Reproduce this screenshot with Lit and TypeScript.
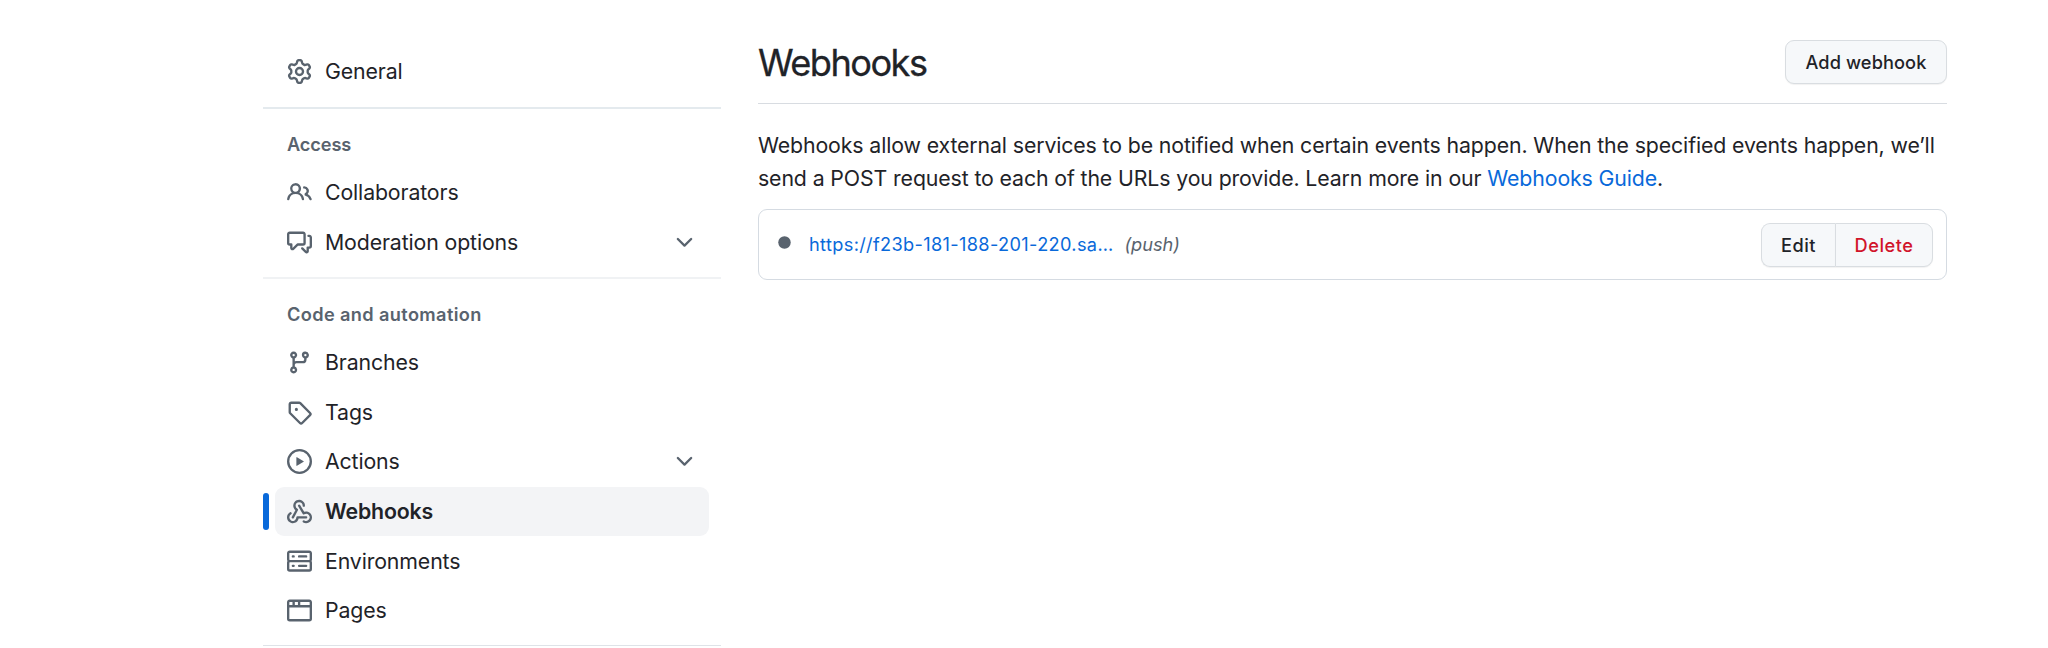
import { LitElement, html, css, svg } from "lit";
import { customElement } from "lit/decorators.js";

const icons: Record<string, string> = {
  gear: "M8 0a8.2 8.2 0 0 1 .701.031C9.444.095 9.99.645 10.16 1.29l.288 1.107c.018.066.079.158.212.224.231.114.454.243.668.386.123.082.233.09.299.071l1.103-.303c.644-.176 1.392.021 1.82.63.27.385.506.792.704 1.218.315.675.111 1.422-.364 1.891l-.814.806c-.049.048-.098.147-.088.294.016.257.016.515 0 .772-.01.147.038.246.088.294l.814.806c.475.469.679 1.216.364 1.891a7.977 7.977 0 0 1-.704 1.217c-.428.61-1.176.807-1.82.63l-1.102-.302c-.067-.019-.177-.011-.3.071a5.909 5.909 0 0 1-.668.386c-.133.066-.194.158-.211.224l-.29 1.106c-.168.646-.715 1.196-1.458 1.26a8.006 8.006 0 0 1-1.402 0c-.743-.064-1.289-.614-1.458-1.26l-.289-1.106c-.018-.066-.079-.158-.212-.224a5.738 5.738 0 0 1-.668-.386c-.123-.082-.233-.09-.299-.071l-1.103.303c-.644.176-1.392-.021-1.82-.63a8.12 8.12 0 0 1-.704-1.218c-.315-.675-.111-1.422.363-1.891l.815-.806c.05-.048.098-.147.088-.294a6.214 6.214 0 0 1 0-.772c.01-.147-.038-.246-.088-.294l-.815-.806C.635 6.045.431 5.298.746 4.623a7.92 7.92 0 0 1 .704-1.217c.428-.61 1.176-.807 1.82-.63l1.102.302c.067.019.177.011.3-.071.214-.143.437-.272.668-.386.133-.066.194-.158.211-.224l.29-1.106C6.009.645 6.556.095 7.299.03 7.53.01 7.764 0 8 0Zm-.571 1.525c-.036.003-.108.036-.137.146l-.289 1.105c-.147.561-.549.967-.998 1.189-.173.086-.34.183-.5.29-.417.278-.97.423-1.529.27l-1.103-.303c-.109-.03-.175.016-.195.045-.22.312-.412.644-.573.99-.014.031-.021.11.059.19l.815.806c.411.406.562.957.53 1.456a4.709 4.709 0 0 0 0 .582c.032.499-.119 1.05-.53 1.456l-.815.806c-.081.08-.073.159-.059.19.162.346.353.677.573.989.02.03.085.076.195.046l1.102-.303c.56-.153 1.113-.008 1.53.27.161.107.328.204.501.29.447.222.85.629.997 1.189l.289 1.105c.029.109.101.143.137.146a6.6 6.6 0 0 0 1.142 0c.036-.003.108-.036.137-.146l.289-1.105c.147-.561.549-.967.998-1.189.173-.086.34-.183.5-.29.417-.278.97-.423 1.529-.27l1.103.303c.109.029.175-.016.195-.045.22-.313.411-.644.573-.99.014-.031.021-.11-.059-.19l-.815-.806c-.411-.406-.562-.957-.53-1.456a4.709 4.709 0 0 0 0-.582c-.032-.499.119-1.05.53-1.456l.815-.806c.081-.08.073-.159.059-.19a6.464 6.464 0 0 0-.573-.989c-.02-.03-.085-.076-.195-.046l-1.102.303c-.56.153-1.113.008-1.53-.27a4.44 4.44 0 0 0-.501-.29c-.447-.222-.85-.629-.997-1.189l-.289-1.105c-.029-.11-.101-.143-.137-.146a6.6 6.6 0 0 0-1.142 0ZM11 8a3 3 0 1 1-6 0 3 3 0 0 1 6 0ZM9.5 8a1.5 1.5 0 1 0-3.001.001A1.5 1.5 0 0 0 9.5 8Z",
  people: "M2 5.5a3.5 3.5 0 1 1 5.898 2.549 5.508 5.508 0 0 1 3.034 4.084.75.75 0 1 1-1.482.235 4 4 0 0 0-7.9 0 .75.75 0 0 1-1.482-.236A5.507 5.507 0 0 1 3.102 8.05 3.493 3.493 0 0 1 2 5.5ZM11 4a3.001 3.001 0 0 1 2.22 5.018 5.01 5.01 0 0 1 2.56 3.012.749.749 0 0 1-.885.954.752.752 0 0 1-.549-.514 3.507 3.507 0 0 0-2.522-2.372.75.75 0 0 1-.574-.73v-.352a.75.75 0 0 1 .416-.672A1.5 1.5 0 0 0 11 5.5.75.75 0 0 1 11 4Zm-5.5-.5a2 2 0 1 0-.001 3.999A2 2 0 0 0 5.5 3.5Z",
  comments: "M1.75 1h8.5c.966 0 1.75.784 1.75 1.75v5.5A1.75 1.75 0 0 1 10.25 10H7.061l-2.574 2.573A1.458 1.458 0 0 1 2 11.543V10h-.25A1.75 1.75 0 0 1 0 8.25v-5.5C0 1.784.784 1 1.75 1ZM1.5 2.75v5.5c0 .138.112.25.25.25h1a.75.75 0 0 1 .75.75v2.19l2.72-2.72a.749.749 0 0 1 .53-.22h3.5a.25.25 0 0 0 .25-.25v-5.5a.25.25 0 0 0-.25-.25h-8.5a.25.25 0 0 0-.25.25Zm13 2a.25.25 0 0 0-.25-.25h-.5a.75.75 0 0 1 0-1.5h.5c.966 0 1.75.784 1.75 1.75v5.5A1.75 1.75 0 0 1 14.25 12H14v1.543a1.458 1.458 0 0 1-2.487 1.03L9.22 12.28a.749.749 0 0 1 .326-1.275.749.749 0 0 1 .734.215l2.22 2.22v-2.19a.75.75 0 0 1 .75-.75h1a.25.25 0 0 0 .25-.25Z",
  branch: "M9.5 3.25a2.25 2.25 0 1 1 3 2.122V6A2.5 2.5 0 0 1 10 8.5H6a1 1 0 0 0-1 1v1.128a2.251 2.251 0 1 1-1.5 0V5.372a2.25 2.25 0 1 1 1.5 0v1.836A2.493 2.493 0 0 1 6 7h4a1 1 0 0 0 1-1v-.628A2.25 2.25 0 0 1 9.5 3.25Zm-6 0a.75.75 0 1 0 1.5 0 .75.75 0 0 0-1.5 0Zm8.25-.75a.75.75 0 1 0 0 1.5.75.75 0 0 0 0-1.5ZM4.25 12a.75.75 0 1 0 0 1.5.75.75 0 0 0 0-1.5Z",
  tag: "M1 7.775V2.75C1 1.784 1.784 1 2.75 1h5.025c.464 0 .91.184 1.238.513l6.25 6.25a1.75 1.75 0 0 1 0 2.474l-5.026 5.026a1.75 1.75 0 0 1-2.474 0l-6.25-6.25A1.752 1.752 0 0 1 1 7.775Zm1.5 0c0 .066.026.13.073.177l6.25 6.25a.25.25 0 0 0 .354 0l5.025-5.025a.25.25 0 0 0 0-.354l-6.25-6.25a.25.25 0 0 0-.177-.073H2.75a.25.25 0 0 0-.25.25ZM6 5a1 1 0 1 1 0 2 1 1 0 0 1 0-2Z",
  play: "M8 0a8 8 0 1 1 0 16A8 8 0 0 1 8 0ZM1.5 8a6.5 6.5 0 1 0 13 0 6.5 6.5 0 0 0-13 0Zm4.879-2.773 4.264 2.559a.25.25 0 0 1 0 .428l-4.264 2.559A.25.25 0 0 1 6 10.559V5.442a.25.25 0 0 1 .379-.215Z",
  webhook: "M5.5 4.25a2.25 2.25 0 0 1 4.5 0 .75.75 0 0 0 1.5 0 3.75 3.75 0 1 0-6.14 2.889l-2.272 4.258a.75.75 0 0 0 1.324.706L7 7.25a.75.75 0 0 0-.309-1.015A2.25 2.25 0 0 1 5.5 4.25ZM7.364 3.607a.75.75 0 0 1 1.03.257l2.608 4.349a3.75 3.75 0 1 1-.628 6.785.75.75 0 0 1 .752-1.299 2.25 2.25 0 1 0-.033-3.88.75.75 0 0 1-1.03-.256L7.107 4.636a.75.75 0 0 1 .257-1.03ZM2.9 8.776A.75.75 0 0 1 2.625 9.8 2.25 2.25 0 1 0 6 11.75a.75.75 0 0 1 .75-.751h5.5a.75.75 0 0 1 0 1.5H7.425a3.751 3.751 0 1 1-5.55-3.998.75.75 0 0 1 1.024.274Z",
  server: "M1.75 1h12.5c.966 0 1.75.784 1.75 1.75v4c0 .372-.116.717-.314 1 .198.283.314.628.314 1v4a1.75 1.75 0 0 1-1.75 1.75H1.75A1.75 1.75 0 0 1 0 12.75v-4c0-.358.109-.707.314-1a1.739 1.739 0 0 1-.314-1v-4C0 1.784.784 1 1.75 1ZM1.5 2.75v4c0 .138.112.25.25.25h12.5a.25.25 0 0 0 .25-.25v-4a.25.25 0 0 0-.25-.25H1.75a.25.25 0 0 0-.25.25Zm.25 5.75a.25.25 0 0 0-.25.25v4c0 .138.112.25.25.25h12.5a.25.25 0 0 0 .25-.25v-4a.25.25 0 0 0-.25-.25ZM7 4.75A.75.75 0 0 1 7.75 4h4.5a.75.75 0 0 1 0 1.5h-4.5A.75.75 0 0 1 7 4.75ZM7.75 10h4.5a.75.75 0 0 1 0 1.5h-4.5a.75.75 0 0 1 0-1.5ZM3 4.75A.75.75 0 0 1 3.75 4h.5a.75.75 0 0 1 0 1.5h-.5A.75.75 0 0 1 3 4.75ZM3.75 10h.5a.75.75 0 0 1 0 1.5h-.5a.75.75 0 0 1 0-1.5Z",
  browser: "M0 2.75C0 1.784.784 1 1.75 1h12.5c.966 0 1.75.784 1.75 1.75v10.5A1.75 1.75 0 0 1 14.25 15H1.75A1.75 1.75 0 0 1 0 13.25ZM14.5 6h-13v7.25c0 .138.112.25.25.25h12.5a.25.25 0 0 0 .25-.25Zm-6-3.5v2h6V2.75a.25.25 0 0 0-.25-.25ZM5 2.5v2h2v-2Zm-3.25 0a.25.25 0 0 0-.25.25V4.5h2v-2Z",
  chevron: "M12.78 5.22a.749.749 0 0 1 0 1.06l-4.25 4.25a.749.749 0 0 1-1.06 0L3.22 6.28a.749.749 0 1 1 1.06-1.06L8 8.939l3.72-3.719a.749.749 0 0 1 1.06 0Z",
  dot: "M8 4a4 4 0 1 1 0 8 4 4 0 0 1 0-8Z",
};
const icon = (name: string, cls = "icon") =>
  html`<svg class=${cls} viewBox="0 0 16 16" aria-hidden="true">${svg`<path fill-rule="evenodd" d=${icons[name]}></path>`}</svg>`;

type Item = { icon: string; label: string; open?: boolean; current?: boolean };
const groups: { title?: string; cls?: string; items: Item[] }[] = [
  { items: [{ icon: "gear", label: "General" }] },
  {
    title: "Access",
    cls: "soft",
    items: [
      { icon: "people", label: "Collaborators" },
      { icon: "comments", label: "Moderation options", open: true },
    ],
  },
  {
    title: "Code and automation",
    cls: "wide",
    items: [
      { icon: "branch", label: "Branches" },
      { icon: "tag", label: "Tags" },
      { icon: "play", label: "Actions", open: true },
      { icon: "webhook", label: "Webhooks", current: true },
      { icon: "server", label: "Environments" },
      { icon: "browser", label: "Pages" },
    ],
  },
];

@customElement("app-root")
export class AppRoot extends LitElement {
  static styles = css`
    :host {
      display: block;
      height: 648px;
      overflow: hidden;
      background: #fff;
      color: #1f2328;
      font-family: Inter, "Liberation Sans", sans-serif;
      font-size: 21.3px;
      letter-spacing: -0.128px;
    }
    * { box-sizing: border-box; }
    .page { display: grid; grid-template-columns: 458px 1189px; column-gap: 37px; padding-left: 263px; }
    .group { display: flex; flex-direction: column; padding: 0 12px 10.5px; border-bottom: 2px solid #e4eaee; }
    .group.soft { border-bottom-color: #f0f2f4; }
    .group.wide { border-bottom: 1px solid #dfe3e8; }
    .group:first-child { padding-top: 46px; padding-bottom: 11.5px; }
    .title { margin: 0; height: 58.5px; padding: 22px 12px 0; font-size: 18.2px; line-height: 26px; font-weight: 600; color: #59636e; }
    .wide .title { letter-spacing: 0.37px; }
    .item { display: flex; align-items: center; height: 48.4px; margin-top: 1.05px; padding: 0 12px; gap: 13px; position: relative; border-radius: 9px; line-height: 31px; }
    .wide .item { margin-top: 1.2px; }
    .current { background: #f3f4f6; font-weight: 600; letter-spacing: -0.15px; }
    .current::before { content: ""; position: absolute; left: -12px; top: 5.5px; width: 6px; height: 37.5px; border-radius: 6px; background: #0969da; }
    .icon { width: 25px; height: 25px; fill: #59636e; flex: none; }
    .chevron { width: 25px; height: 25px; fill: #59636e; margin-left: auto; }
    .head { display: flex; justify-content: space-between; align-items: flex-start; height: 104px; padding-top: 40px; border-bottom: 1px solid #d8dce1; }
    h1 { margin: 0; font-size: 36.2px; font-weight: 400; line-height: 46px; letter-spacing: -1.55px; -webkit-text-stroke: 0.3px #1f2328; }
    .btn {
      display: flex; align-items: center; justify-content: center; height: 44px; padding: 0;
      font: 500 18.2px Inter, "Liberation Sans", sans-serif; color: #1f2328;
      background: #f6f8fa; border: 1px solid #d9dde1; border-radius: 9px;
      box-shadow: 0 1px 1px rgba(31, 35, 40, 0.06);
    }
    .add { width: 162px; letter-spacing: 0.1px; }
    .intro { margin: 25px 0 0; line-height: 33px; white-space: nowrap; letter-spacing: -0.122px; }
    a { color: #0969da; text-decoration: none; }
    .card { display: flex; align-items: center; height: 71px; margin-top: 14px; padding: 0 13px; border: 1px solid #d5dbe2; border-radius: 9px; font-size: 18.2px; }
    .status { width: 25px; height: 25px; fill: #59636e; margin: -5px 12px 0 0; }
    .url { letter-spacing: 0.34px; padding-bottom: 2px; }
    .events { margin-left: 11px; color: #59636e; font-style: italic; letter-spacing: 0; padding-bottom: 2px; }
    .actions { display: flex; margin-left: auto; }
    .edit { width: 74px; border-radius: 9px 0 0 9px; border-right: 0; letter-spacing: 0.55px; }
    .delete { width: 98px; border-radius: 0 9px 9px 0; color: #d1142a; letter-spacing: 0.5px; }
  `;

  render() {
    return html`<div class="page">
      <nav>
        ${groups.map(
          (g) => html`<section class="group ${g.cls ?? ""}">
            ${g.title ? html`<h2 class="title">${g.title}</h2>` : ""}
            ${g.items.map(
              (i) => html`<div class="item ${i.current ? "current" : ""}">
                ${icon(i.icon)}<span>${i.label}</span>${i.open ? icon("chevron", "chevron") : ""}
              </div>`
            )}
          </section>`
        )}
      </nav>
      <main>
        <header class="head">
          <h1>Webhooks</h1>
          <button class="btn add">Add webhook</button>
        </header>
        <p class="intro">Webhooks allow external services to be notified when certain events happen. When the specified events happen, we’ll<br />send a POST request to each of the URLs you provide. Learn more in our <a>Webhooks Guide</a>.</p>
        <div class="card">
          ${icon("dot", "status")}
          <a class="url">https://f23b-181-188-201-220.sa…</a>
          <span class="events">(push)</span>
          <div class="actions">
            <button class="btn edit">Edit</button>
            <button class="btn delete">Delete</button>
          </div>
        </div>
      </main>
    </div>`;
  }
}
